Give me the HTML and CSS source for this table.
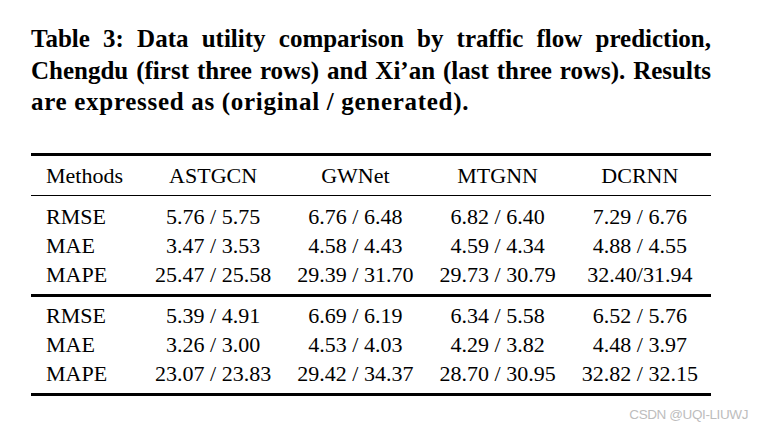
FILE: index.html
```html
<!DOCTYPE html>
<html lang="en">
<head>
<meta charset="utf-8">
<title>Table 3</title>
<link rel="stylesheet" href="styles.css">
</head>
<body>
<div class="page">
  <p class="caption">
    <span class="line just">Table 3: Data utility comparison by traffic flow prediction,</span>
    <span class="line just">Chengdu (first three rows) and Xi’an (last three rows). Results</span>
    <span class="line last-line">are expressed as (original / generated).</span>
  </p>
  <table class="results">
    <colgroup>
      <col class="col-method">
      <col span="4">
    </colgroup>
    <thead>
      <tr><th>Methods</th><th>ASTGCN</th><th>GWNet</th><th>MTGNN</th><th>DCRNN</th></tr>
    </thead>
    <tbody class="group first-group">
      <tr class="first"><td>RMSE</td><td>5.76 / 5.75</td><td>6.76 / 6.48</td><td>6.82 / 6.40</td><td>7.29 / 6.76</td></tr>
      <tr><td>MAE</td><td>3.47 / 3.53</td><td>4.58 / 4.43</td><td>4.59 / 4.34</td><td>4.88 / 4.55</td></tr>
      <tr class="last"><td>MAPE</td><td>25.47 / 25.58</td><td>29.39 / 31.70</td><td>29.73 / 30.79</td><td>32.40/31.94</td></tr>
    </tbody>
    <tbody class="group second-group">
      <tr class="first"><td>RMSE</td><td>5.39 / 4.91</td><td>6.69 / 6.19</td><td>6.34 / 5.58</td><td>6.52 / 5.76</td></tr>
      <tr><td>MAE</td><td>3.26 / 3.00</td><td>4.53 / 4.03</td><td>4.29 / 3.82</td><td>4.48 / 3.97</td></tr>
      <tr class="last"><td>MAPE</td><td>23.07 / 23.83</td><td>29.42 / 34.37</td><td>28.70 / 30.95</td><td>32.82 / 32.15</td></tr>
    </tbody>
  </table>
</div>
<div class="watermark">CSDN @UQI-LIUWJ</div>
</body>
</html>
```
FILE: styles.css
```css
html, body {
  margin: 0;
  background: #ffffff;
}

body {
  font-family: "Liberation Serif", "Times New Roman", serif;
  color: #000000;
  width: 760px;
  height: 430px;
  position: relative;
  overflow: hidden;
}

.page {
  padding: 23px 0 0 31px;
  width: 680px;
}

.caption {
  margin: 0;
  font-weight: 700;
  font-size: 25px;
  line-height: 31.5px;
}

.line {
  display: block;
}

.line.just {
  text-align: justify;
  text-align-last: justify;
}

.last-line {
  letter-spacing: 0.7px;
}

.results {
  margin-top: 35.5px;
  width: 680px;
  table-layout: fixed;
  border-collapse: separate;
  border-spacing: 0;
  font-size: 22px;
  line-height: 29px;
}

.col-method {
  width: 111px;
}

.results th,
.results td {
  padding: 0;
  text-align: center;
  font-weight: normal;
  white-space: nowrap;
}

.results th:first-child,
.results td:first-child {
  text-align: left;
  padding-left: 15px;
}

.results th {
  border-top: 3px solid #000;
  border-bottom: 1px solid #000;
  padding-top: 5px;
  padding-bottom: 5px;
}

.first-group .first td {
  padding-top: 6px;
}

.second-group .first td {
  border-top: 3px solid #000;
  padding-top: 4px;
}

.group .last td {
  padding-bottom: 5px;
}

.second-group .last td {
  border-bottom: 3px solid #000;
}

.watermark {
  position: absolute;
  right: 12px;
  top: 408px;
  font-family: "Liberation Sans", Arial, sans-serif;
  font-size: 13.5px;
  line-height: 14px;
  letter-spacing: -0.4px;
  color: #bdbdbd;
}
```
